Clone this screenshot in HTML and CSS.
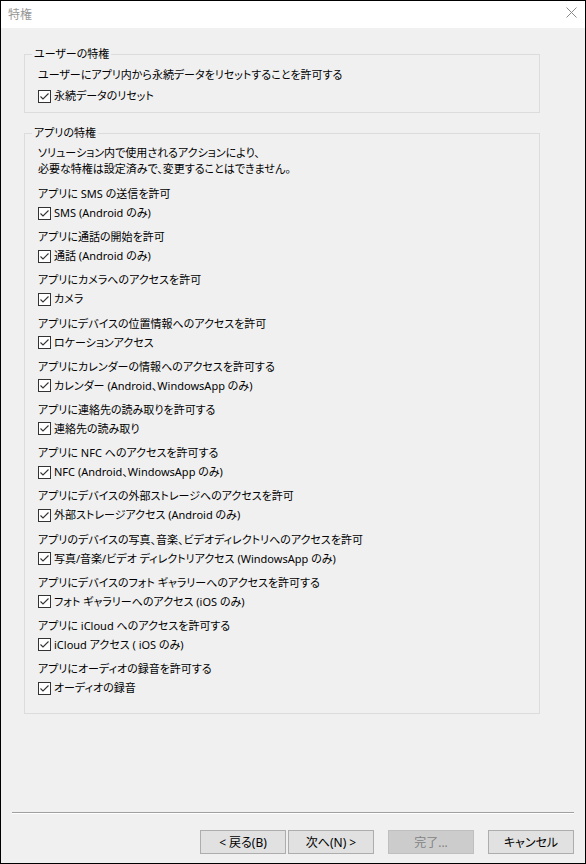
FILE: index.html
```html
<!DOCTYPE html>
<html lang="ja">
<head>
    <meta charset="UTF-8">
    <title>特権</title>
    <link rel="stylesheet" href="styles.css">
</head>
<body>
    <div class="window">
        <div class="titlebar">
            <span class="title">特権</span>
            <svg class="close" width="11" height="11" viewBox="0 0 11 11">
                <path d="M0.5 0.5 L10.5 10.5 M10.5 0.5 L0.5 10.5" stroke="#8a8a8a" stroke-width="1" fill="none"/>
            </svg>
        </div>

        <div class="content">
            <fieldset class="group group-user">
                <legend>ユーザーの特権</legend>
                <div class="perm-label">ユーザーにアプリ内から永続データをリセットすることを許可する</div>
                <label class="check">
                    <svg class="box" width="13" height="13" viewBox="0 0 13 13"><rect x="0.5" y="0.5" width="12" height="12" fill="#fff" stroke="#333"/><path d="M2.5 6.5 L5 9 L10.5 3.5" stroke="#333" stroke-width="1.1" fill="none"/></svg>
                    永続データのリセット
                </label>
            </fieldset>

            <fieldset class="group group-app">
                <legend>アプリの特権</legend>
                <div class="note">ソリューション内で使用されるアクションにより、<br>必要な特権は設定済みで、変更することはできません。</div>
                <div class="perm-list" id="permList"></div>
            </fieldset>
        </div>

        <div class="footer">
            <div class="separator"></div>
            <div class="buttons">
                <button class="btn btn-back">&lt; 戻る(B)</button>
                <button class="btn btn-next">次へ(N) &gt;</button>
                <button class="btn btn-finish" disabled>完了...</button>
                <button class="btn btn-cancel">キャンセル</button>
            </div>
        </div>
    </div>

    <script>
        const perms = [
            ['アプリに SMS の送信を許可', 'SMS (Android のみ)'],
            ['アプリに通話の開始を許可', '通話 (Android のみ)'],
            ['アプリにカメラへのアクセスを許可', 'カメラ'],
            ['アプリにデバイスの位置情報へのアクセスを許可', 'ロケーションアクセス'],
            ['アプリにカレンダーの情報へのアクセスを許可する', 'カレンダー (Android、WindowsApp のみ)'],
            ['アプリに連絡先の読み取りを許可する', '連絡先の読み取り'],
            ['アプリに NFC へのアクセスを許可する', 'NFC (Android、WindowsApp のみ)'],
            ['アプリにデバイスの外部ストレージへのアクセスを許可', '外部ストレージアクセス (Android のみ)'],
            ['アプリのデバイスの写真、音楽、ビデオディレクトリへのアクセスを許可', '写真/音楽/ビデオ ディレクトリアクセス (WindowsApp のみ)'],
            ['アプリにデバイスのフォト ギャラリーへのアクセスを許可する', 'フォト ギャラリーへのアクセス (iOS のみ)'],
            ['アプリに iCloud へのアクセスを許可する', 'iCloud アクセス ( iOS のみ)'],
            ['アプリにオーディオの録音を許可する', 'オーディオの録音']
        ];

        const box = document.querySelector('.group-user .box').outerHTML;
        const list = document.getElementById('permList');
        perms.forEach(p => {
            const item = document.createElement('div');
            item.className = 'perm';
            item.innerHTML = '<div class="perm-label"></div><label class="check">' + box + '<span></span></label>';
            item.querySelector('.perm-label').textContent = p[0];
            item.querySelector('.check span').textContent = p[1];
            list.appendChild(item);
        });
    </script>
</body>
</html>
```

FILE: styles.css
```css
body {
    margin: 0;
    font-family: "Noto Sans", "Noto Sans CJK JP", sans-serif;
    font-size: 11px;
    font-feature-settings: "palt";
    color: #000;
}
.window {
    box-sizing: border-box;
    height: 864px;
    border: 1px solid #000;
    background: #f0f0f0;
    display: flex;
    flex-direction: column;
}
.titlebar {
    height: 27px;
    background: #fff;
    display: flex;
    align-items: center;
    justify-content: space-between;
    padding: 0 8px 0 7px;
}
.title {
    color: #999;
    font-size: 12px;
    line-height: 16px;
}
.close {
    display: block;
    margin-top: -4px;
}
.content {
    flex: 1;
    padding: 18px 0 0 23px;
}
.group {
    width: 516px;
    min-width: 0;
    box-sizing: border-box;
    margin: 0;
    border: 1px solid #dcdcdc;
    padding: 4px 13px 7px;
}
.group legend {
    margin-left: -6px;
    padding: 0 2px;
    line-height: 16px;
}
.group + .group {
    margin-top: 12px;
}
.group-app {
    padding-bottom: 16px;
}
.perm-label {
    line-height: 18px;
}
.check {
    display: flex;
    align-items: center;
    gap: 3px;
    line-height: 18px;
    margin-top: 1px;
}
.group-user .check {
    margin-top: 3px;
}
.box {
    display: block;
    flex: none;
}
.note {
    line-height: 16px;
}
.perm-list {
    margin-top: 8px;
}
.perm {
    margin-bottom: 6.2px;
}
.perm:last-child {
    margin-bottom: 0;
}
.footer {
    padding: 0 11px 9px;
}
.separator {
    border-top: 1px solid #a0a0a0;
    border-bottom: 1px solid #fff;
    margin-bottom: 16px;
}
.buttons {
    display: flex;
    justify-content: flex-end;
}
.btn {
    width: 86px;
    height: 24px;
    box-sizing: border-box;
    margin-left: 14px;
    padding: 0;
    border: 1px solid #adadad;
    background: #e1e1e1;
    font: inherit;
    font-size: 12px;
    color: #000;
}
.btn-next {
    margin-left: 2px;
}
.btn:disabled {
    background: #cccccc;
    border-color: #bfbfbf;
    color: #838383;
}
```
